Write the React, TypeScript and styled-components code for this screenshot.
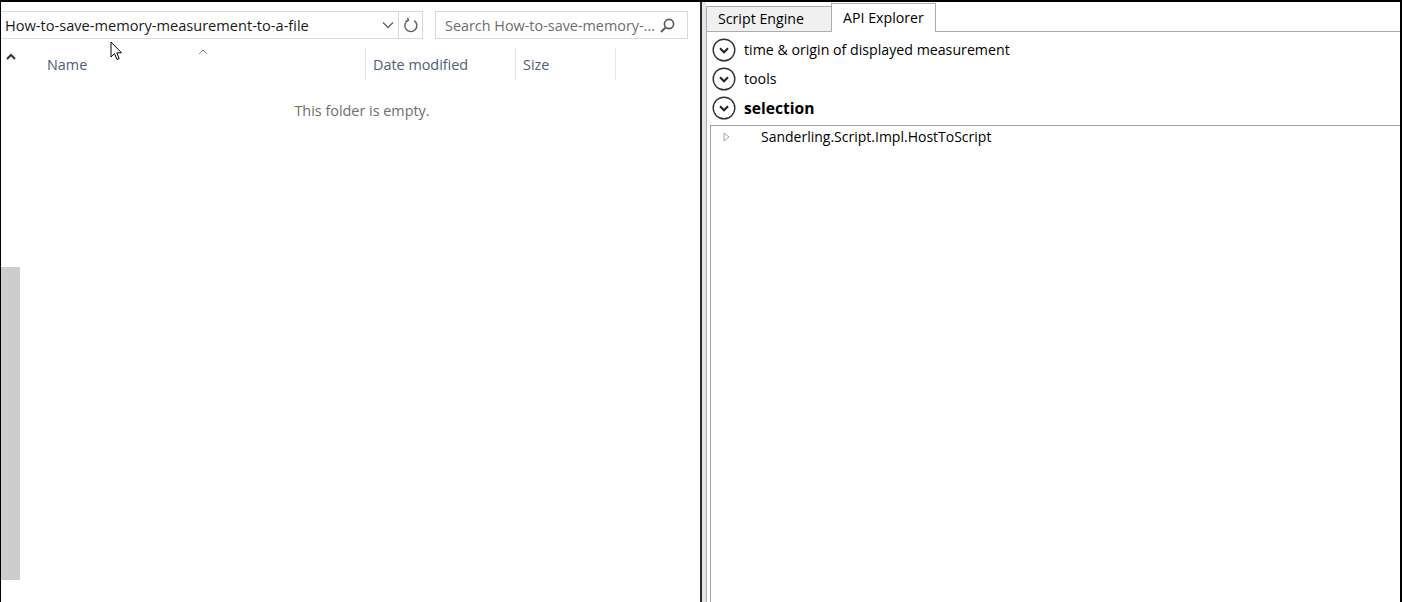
import React from "react";
import styled, { createGlobalStyle } from "styled-components";

const FONT = `"Open Sans", "Noto Sans", "Liberation Sans", sans-serif`;

const GlobalStyle = createGlobalStyle`
  html, body { margin: 0; padding: 0; background: #ffffff; }
  * { box-sizing: border-box; }
  body { font-family: ${FONT}; }
`;

const Frame = styled.div`
  width: 1402px;
  height: 602px;
  display: flex;
  border-top: 2px solid #000;
  border-left: 1px solid #000;
  border-right: 2px solid #000;
  background: #fff;
  overflow: hidden;
`;

/* ---------- Left: file explorer ---------- */

const LeftPanel = styled.section`
  position: relative;
  width: 699px;
  display: flex;
  flex-direction: column;
  background: #fff;
`;

const Toolbar = styled.div`
  display: flex;
  margin-top: 9px;
  gap: 12px;
  height: 28px;
`;

const AddressBox = styled.div`
  width: 422px;
  display: flex;
  align-items: center;
  border: 1px solid #d9d9d9;
  border-left: none;
`;

const AddressText = styled.span`
  flex: 1;
  padding-left: 4px;
  font-size: 14.6px;
  color: #1a1a1a;
  white-space: nowrap;
`;

const DropButton = styled.div`
  width: 22px;
  height: 100%;
  display: flex;
  align-items: center;
  justify-content: center;
  border-right: 1px solid #d9d9d9;
`;

const RefreshButton = styled.div`
  width: 23px;
  height: 100%;
  display: flex;
  align-items: center;
  justify-content: center;
`;

const SearchBox = styled.div`
  width: 253px;
  display: flex;
  align-items: center;
  border: 1px solid #d9d9d9;
  padding: 0 12px 0 9px;
`;

const SearchText = styled.span`
  flex: 1;
  font-size: 14.4px;
  color: #6d6d6d;
  white-space: nowrap;
  overflow: hidden;
`;

const LeftBody = styled.div`
  flex: 1;
  display: flex;
`;

const NavColumn = styled.div`
  width: 19px;
  display: flex;
  flex-direction: column;
  align-items: center;
`;

const UpCaret = styled.svg`
  margin-top: 14px;
  margin-left: 1px;
`;

const Thumb = styled.div`
  margin-top: auto;
  margin-bottom: 22px;
  width: 19px;
  height: 313px;
  background: #cdcdcd;
`;

const MainColumn = styled.div`
  flex: 1;
  display: flex;
  flex-direction: column;
  padding-left: 20px;
`;

const HeaderRow = styled.div`
  display: flex;
  margin-top: 9px;
  height: 32px;
`;

const HeaderCell = styled.div<{ $w: number }>`
  position: relative;
  width: ${(p) => p.$w}px;
  display: flex;
  align-items: center;
  padding-left: 7px;
  border-right: 1px solid #e5e5e5;
  font-size: 14.4px;
  color: #4c607a;
`;

const SortCaret = styled.svg`
  position: absolute;
  top: 1px;
  left: 50%;
  margin-left: -5px;
`;

const EmptyMessage = styled.div`
  margin-top: 21px;
  padding-right: 16px;
  text-align: center;
  font-size: 14.4px;
  line-height: 20px;
  color: #6d6d6d;
`;

const Cursor = styled.svg`
  position: absolute;
  left: 109px;
  top: 39px;
`;

/* ---------- Splitter ---------- */

const Splitter = styled.div`
  width: 6px;
  display: flex;
  &::before {
    content: "";
    width: 2px;
    background: #2b2b2b;
  }
  &::after {
    content: "";
    flex: 1;
    background: #e6e6e6;
  }
`;

/* ---------- Right: API explorer ---------- */

const RightPanel = styled.section`
  flex: 1;
  display: flex;
  flex-direction: column;
  background: #fff;
`;

const TabStrip = styled.div`
  height: 29px;
  display: flex;
  align-items: flex-end;
  position: relative;
  z-index: 1;
`;

const Tab = styled.div<{ $active?: boolean; $w: number }>`
  width: ${(p) => p.$w}px;
  height: ${(p) => (p.$active ? 29 : 25)}px;
  margin-bottom: ${(p) => (p.$active ? -1 : 0)}px;
  margin-left: ${(p) => (p.$active ? -1 : 0)}px;
  display: flex;
  align-items: center;
  padding-left: 11px;
  padding-bottom: ${(p) => (p.$active ? 2 : 1)}px;
  border: 1px solid #acacac;
  border-bottom: none;
  background: ${(p) => (p.$active ? "#ffffff" : "#f0f0f0")};
  font-size: 14.2px;
  color: #000;
  white-space: nowrap;
`;

const TabContent = styled.div`
  flex: 1;
  display: flex;
  flex-direction: column;
  border-top: 1px solid #acacac;
  border-left: 1px solid #acacac;
  padding-top: 3px;
`;

const ExpanderHeader = styled.div<{ $big?: boolean }>`
  height: ${(p) => (p.$big ? 30 : 29)}px;
  display: flex;
  align-items: center;
  padding-left: 5px;
  gap: 8px;
  font-size: ${(p) => (p.$big ? 15.6 : 14.2)}px;
  font-weight: ${(p) => (p.$big ? 700 : 400)};
  color: #000;
  white-space: nowrap;
`;

const TreeBox = styled.div`
  flex: 1;
  margin-top: 2px;
  margin-left: 3px;
  border-top: 1px solid #a0a0a0;
  border-left: 1px solid #a0a0a0;
`;

const TreeRow = styled.div`
  height: 21px;
  display: flex;
  align-items: center;
  padding-left: 12px;
  font-size: 14px;
  color: #000;
`;

const TreeLabel = styled.span`
  margin-left: 31px;
`;

function ExpandCircle() {
  return (
    <svg width="24" height="24" viewBox="0 0 24 24">
      <circle cx="12" cy="12" r="10.8" fill="none" stroke="#333" strokeWidth="1.4" />
      <polyline points="8,10.3 12,14.3 16,10.3" fill="none" stroke="#222" strokeWidth="2" />
    </svg>
  );
}

export default function App() {
  return (
    <>
      <GlobalStyle />
      <Frame>
        <LeftPanel>
          <Toolbar>
            <AddressBox>
              <AddressText>How-to-save-memory-measurement-to-a-file</AddressText>
              <DropButton>
                <svg width="12" height="8" viewBox="0 0 12 8">
                  <polyline points="1,1.5 6,6.5 11,1.5" fill="none" stroke="#606060" strokeWidth="1.3" />
                </svg>
              </DropButton>
              <RefreshButton>
                <svg width="16" height="16" viewBox="0 0 16 16">
                  <path d="M5.2 3.2 A6 6 0 1 0 11.2 3.6" fill="none" stroke="#606060" strokeWidth="1.4" />
                  <polyline points="4.6,0.8 5.4,3.4 2.8,4.2" fill="none" stroke="#606060" strokeWidth="1.4" />
                </svg>
              </RefreshButton>
            </AddressBox>
            <SearchBox>
              <SearchText>Search How-to-save-memory-...</SearchText>
              <svg width="15" height="15" viewBox="0 0 15 15">
                <circle cx="9" cy="6" r="4.6" fill="none" stroke="#555" strokeWidth="1.6" />
                <line x1="5.7" y1="9.3" x2="1" y2="14" stroke="#555" strokeWidth="1.8" />
              </svg>
            </SearchBox>
          </Toolbar>
          <LeftBody>
            <NavColumn>
              <UpCaret width="10" height="8" viewBox="0 0 10 8">
                <polyline points="1,6 5,2 9,6" fill="none" stroke="#333" strokeWidth="2" />
              </UpCaret>
              <Thumb />
            </NavColumn>
            <MainColumn>
              <HeaderRow>
                <HeaderCell $w={326}>
                  <SortCaret width="10" height="6" viewBox="0 0 10 6">
                    <polyline points="1,5 5,1 9,5" fill="none" stroke="#8a8a8a" strokeWidth="1" />
                  </SortCaret>
                  Name
                </HeaderCell>
                <HeaderCell $w={150}>Date modified</HeaderCell>
                <HeaderCell $w={100}>Size</HeaderCell>
              </HeaderRow>
              <EmptyMessage>This folder is empty.</EmptyMessage>
            </MainColumn>
          </LeftBody>
          <Cursor width="13" height="21" viewBox="0 0 13 21">
            <path
              d="M1 1 L1 16 L4.5 12.6 L7 18.5 L9.2 17.6 L6.8 11.8 L11.5 11.8 Z"
              fill="#fff"
              stroke="#000"
              strokeWidth="1"
              strokeLinejoin="miter"
            />
          </Cursor>
        </LeftPanel>
        <Splitter />
        <RightPanel>
          <TabStrip>
            <Tab $w={126}>Script Engine</Tab>
            <Tab $w={105} $active>
              API Explorer
            </Tab>
          </TabStrip>
          <TabContent>
            <ExpanderHeader>
              <ExpandCircle />
              time &amp; origin of displayed measurement
            </ExpanderHeader>
            <ExpanderHeader>
              <ExpandCircle />
              tools
            </ExpanderHeader>
            <ExpanderHeader $big>
              <ExpandCircle />
              selection
            </ExpanderHeader>
            <TreeBox>
              <TreeRow>
                <svg width="7" height="10" viewBox="0 0 7 10">
                  <path d="M1 1 L6 5 L1 9 Z" fill="none" stroke="#a6a6a6" strokeWidth="1" />
                </svg>
                <TreeLabel>Sanderling.Script.Impl.HostToScript</TreeLabel>
              </TreeRow>
            </TreeBox>
          </TabContent>
        </RightPanel>
      </Frame>
    </>
  );
}
